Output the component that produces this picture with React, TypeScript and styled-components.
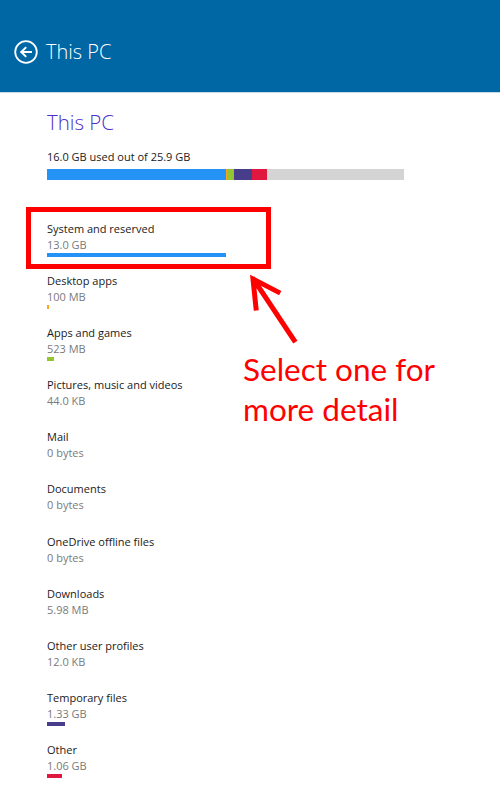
import React from "react";
import styled, { createGlobalStyle } from "styled-components";

type Category = {
  name: string;
  size: string;
  color?: string;
  barWidth?: number;
};

const CATEGORIES: Category[] = [
  { name: "System and reserved", size: "13.0 GB", color: "#2592f5", barWidth: 179 },
  { name: "Desktop apps", size: "100 MB", color: "#f5a623", barWidth: 2 },
  { name: "Apps and games", size: "523 MB", color: "#94c530", barWidth: 7 },
  { name: "Pictures, music and videos", size: "44.0 KB" },
  { name: "Mail", size: "0 bytes" },
  { name: "Documents", size: "0 bytes" },
  { name: "OneDrive offline files", size: "0 bytes" },
  { name: "Downloads", size: "5.98 MB" },
  { name: "Other user profiles", size: "12.0 KB" },
  { name: "Temporary files", size: "1.33 GB", color: "#483d8b", barWidth: 18 },
  { name: "Other", size: "1.06 GB", color: "#e0173f", barWidth: 15 },
];

const USAGE = [
  { color: "#2592f5", width: 179 },
  { color: "#f5a623", width: 1 },
  { color: "#94c530", width: 7 },
  { color: "#483d8b", width: 18 },
  { color: "#e0173f", width: 15 },
];

const GlobalStyle = createGlobalStyle`
  html, body {
    margin: 0;
    padding: 0;
    background: #fff;
  }
  body {
    font-family: "Open Sans", "Noto Sans", sans-serif;
  }
`;

const App: React.FC = () => {
  return (
    <>
      <GlobalStyle />
      <Page>
        <Header>
          <BackButton aria-label="back">
            <svg width="24" height="24" viewBox="0 0 24 24" fill="none">
              <circle cx="12" cy="12" r="10.8" stroke="#fff" strokeWidth="1.8" />
              <path
                d="M17 12H7.5M11.5 7.8L7.3 12l4.2 4.2"
                stroke="#fff"
                strokeWidth="2"
                strokeLinecap="square"
              />
            </svg>
          </BackButton>
          <HeaderTitle>This PC</HeaderTitle>
        </Header>

        <Content>
          <Title>This PC</Title>
          <Usage>16.0 GB used out of 25.9 GB</Usage>
          <UsageBar>
            {USAGE.map((s, i) => (
              <Segment key={i} color={s.color} style={{ width: s.width }} />
            ))}
          </UsageBar>

          <List>
            {CATEGORIES.map((c) => (
              <Item key={c.name}>
                <ItemName>{c.name}</ItemName>
                <ItemSize>{c.size}</ItemSize>
                <ItemBarTrack>
                  {c.color && (
                    <Segment color={c.color} style={{ width: c.barWidth }} />
                  )}
                </ItemBarTrack>
              </Item>
            ))}
          </List>
        </Content>

        <Highlight />
        <Arrow width="60" height="80" viewBox="0 0 60 80">
          <path
            d="M46 68L6 8M8 36L5 7L30 20"
            stroke="#ff0000"
            strokeWidth="5"
            fill="none"
            strokeLinecap="square"
          />
        </Arrow>
        <Callout>
          Select one for
          <br />
          more detail
        </Callout>
      </Page>
    </>
  );
};

const Page = styled.div`
  position: relative;
  width: 500px;
  min-height: 787px;
  background: #fff;
`;

const Header = styled.header`
  display: flex;
  align-items: center;
  gap: 8px;
  height: 80px;
  padding: 12px 0 0 14px;
  background: #0067a5;
  border-bottom: 1px solid #c5d8e8;
`;

const BackButton = styled.div`
  display: flex;
  width: 24px;
  height: 24px;
`;

const HeaderTitle = styled.h1`
  margin: 0;
  color: #fff;
  font-size: 20px;
  font-weight: 300;
  line-height: 30px;
`;

const Content = styled.main`
  display: flex;
  flex-direction: column;
  padding: 14px 0 0 47px;
`;

const Title = styled.h2`
  margin: 0;
  color: #4b2fc8;
  font-size: 20.5px;
  font-weight: 300;
  line-height: 30px;
`;

const Usage = styled.div`
  margin-top: 12px;
  color: #1a1a1a;
  font-size: 11px;
  line-height: 16px;
`;

const UsageBar = styled.div`
  display: flex;
  width: 357px;
  height: 11px;
  margin-top: 4px;
  background: #d4d4d4;
`;

const Segment = styled.div<{ color: string }>`
  height: 100%;
  background: ${(p) => p.color};
`;

const List = styled.div`
  display: flex;
  flex-direction: column;
  margin-top: 41px;
`;

const Item = styled.div`
  display: flex;
  flex-direction: column;
  height: 52.1px;
`;

const ItemName = styled.div`
  color: #1a1a1a;
  font-size: 11px;
  line-height: 16px;
`;

const ItemSize = styled.div`
  color: #7a7a7a;
  font-size: 11px;
  line-height: 16px;
`;

const ItemBarTrack = styled.div`
  display: flex;
  height: 4px;
`;

const Highlight = styled.div`
  position: absolute;
  left: 26px;
  top: 207px;
  width: 235px;
  height: 52px;
  border: 5px solid #ff0000;
`;

const Arrow = styled.svg`
  position: absolute;
  left: 248px;
  top: 272px;
`;

const Callout = styled.div`
  position: absolute;
  left: 243px;
  top: 349px;
  color: #ff0000;
  font-family: Lato, "Liberation Sans", sans-serif;
  font-size: 31.5px;
  line-height: 40px;
`;

export default App;
